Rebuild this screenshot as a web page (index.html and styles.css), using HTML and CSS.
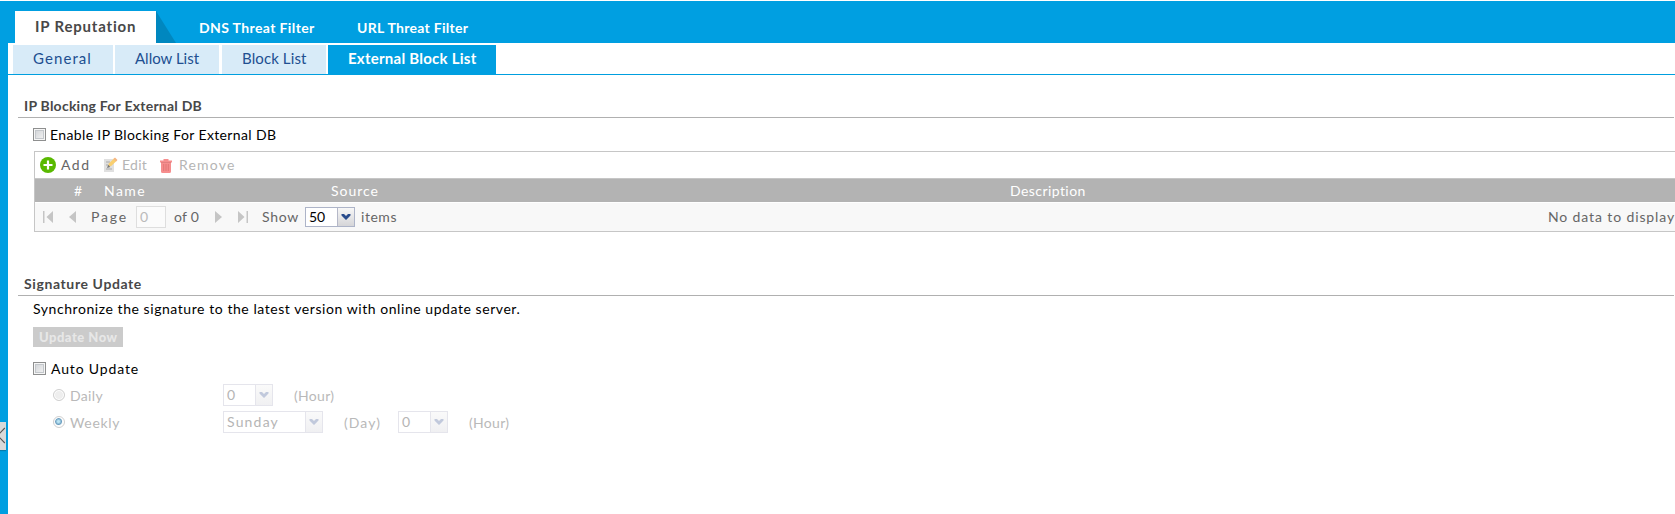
FILE: index.html
```html
<!DOCTYPE html>
<html lang="en">
<head>
<meta charset="utf-8">
<title>IP Reputation</title>
<link rel="stylesheet" href="styles.css">
</head>
<body>
<svg width="0" height="0" class="defs"><symbol id="chev" viewBox="0 0 10 7"><path d="M0.500 0h2.500L5 2 7 0h2.500v1.500L5 6 .5 1.500z"/></symbol></svg>
<div class="app">
  <header class="tabs">
    <div class="tab active">IP Reputation</div><i class="fold"></i>
    <div class="tab dns">DNS Threat Filter</div>
    <div class="tab url">URL Threat Filter</div>
  </header>
  <aside class="rail">
    <div class="handle"><svg width="6" height="28" viewBox="0 0 6 28"><path d="M4.800 6L-2.500 13.500 4.800 21" fill="none" stroke="#555" stroke-width="1.100"/></svg></div>
  </aside>
  <main>
    <nav class="subtabs">
      <div class="sub general">General</div>
      <div class="sub allow">Allow List</div>
      <div class="sub block">Block List</div>
      <div class="sub external">External Block List</div>
    </nav>
    <h2 class="title ip-title"><span>IP Blocking For External DB</span></h2>
    <label class="enable"><i class="check"></i><span>Enable IP Blocking For External DB</span></label>
    <section class="grid">
      <div class="toolbar">
        <svg width="16" height="16" viewBox="0 0 16 16"><circle cx="8" cy="8" r="8" fill="#59b900"/><path d="M8 3.500v9M3.500 8h9" stroke="#fff" stroke-width="2.200"/></svg>
        <span class="add">Add</span>
        <svg class="edit-icon" width="14" height="16" viewBox="0 0 14 16"><path d="M0 2h10v13H0z" fill="#e0e0e0"/><path d="M2 5h4M2 8h2M2 12h6" stroke="#aaa" stroke-width="1.200"/><path d="M4 9.500L4.800 6.500 10.500 1 13 3.500 7.200 9z" fill="#f9cf70"/><path d="M9.500 2L11 .5 13.500 3 12 4.500z" fill="#f5b583"/><path d="M3 11L4.200 7.800 6.300 9.900z" fill="#777"/></svg>
        <span class="edit">Edit</span>
        <svg class="bin-icon" width="12" height="14" viewBox="0 0 12 14"><path d="M0 1.500h3.500V0h5v1.500H12V3.500H0zM1 4h10v8.500Q11 14 9.500 14h-7Q1 14 1 12.500z" fill="#f68e8e"/><path d="M1 3.500h10M3.700 5v7M6 5v7M8.300 5v7" stroke="#dc6f6f" stroke-width=".8"/></svg>
        <span class="remove">Remove</span>
      </div>
      <div class="thead"><span>#</span><span class="name">Name</span><span class="source">Source</span><span class="desc">Description</span></div>
      <div class="pager">
        <svg class="first" width="10" height="12" viewBox="0 0 10 12"><path d="M0 0h1.500v12H0zM10 0v12L3.500 6z"/></svg>
        <svg class="prev" width="7" height="12" viewBox="0 0 7 12"><path d="M7 0v12L0 6z"/></svg>
        <span class="page">Page</span><span class="pageno">0</span><span class="of">of 0</span>
        <svg class="next" width="7" height="12" viewBox="0 0 7 12"><path d="M0 0v12L7 6z"/></svg>
        <svg class="last" width="10" height="12" viewBox="0 0 10 12"><path d="M0 0v12L6.500 6zM8.500 0H10v12H8.500z"/></svg>
        <span class="show">Show</span>
        <div class="select size"><span>50</span><b><svg width="10" height="7"><use href="#chev"/></svg></b></div>
        <span class="items">items</span>
        <span class="nodata">No data to display</span>
      </div>
    </section>
    <h2 class="title sig-title"><span>Signature Update</span></h2>
    <p class="sync">Synchronize the signature to the latest version with online update server.</p>
    <div class="button">Update Now</div>
    <label class="auto"><i class="check"></i><span>Auto Update</span></label>
    <div class="schedule">
      <i class="radio"></i><span class="when daily">Daily</span>
      <div class="select"><span>0</span><b><svg width="10" height="7"><use href="#chev"/></svg></b></div>
      <span class="unit hour">(Hour)</span>
    </div>
    <div class="schedule weekly-row">
      <i class="radio on"></i><span class="when weekly">Weekly</span>
      <div class="select wide"><span class="sunday">Sunday</span><b><svg width="10" height="7"><use href="#chev"/></svg></b></div>
      <span class="unit day">(Day)</span>
      <div class="select"><span>0</span><b><svg width="10" height="7"><use href="#chev"/></svg></b></div>
      <span class="unit hour">(Hour)</span>
    </div>
  </main>
</div>
</body>
</html>
```

FILE: styles.css
```css
* { box-sizing: border-box; }
body { margin: 0; background: #fff; color: #000; font: 14px/22px Lato, "Open Sans", sans-serif; overflow: hidden; }
svg { display: block; flex: none; }
span { white-space: nowrap; }
.defs { position: absolute; }
.app { display: grid; grid-template: 42px 471px / 8px 1667px; padding-top: 1px; }

.tabs { grid-column: 1 / 3; display: flex; background: #009fe1; padding: 10px 0 0 15px; }
.tab { font-weight: 700; color: #fff; line-height: 33px; white-space: nowrap; letter-spacing: .38px; }
.tab.active { width: 141px; padding-left: 20px; background: #fff; color: #484848; font-size: 15px; line-height: 31px; letter-spacing: .82px; }
.fold { width: 20px; height: 32px; background: #0087bf; clip-path: polygon(0 0, 100% 100%, 0 100%); }
.dns { margin-left: 23px; width: 158px; }
.url { letter-spacing: .29px; }

.rail { background: #009fe1; padding-top: 379px; }
.handle { width: 6px; height: 28px; background: #d9d9d9; box-shadow: 0 1px 1px #087bab; overflow: hidden; }

.subtabs { display: flex; height: 32px; padding: 2px 0 0 5px; border-bottom: 1px solid #009fdf; }
.sub { height: 29px; margin-right: 2px; background: #d8ebf8; color: #214f91; font-size: 15px; line-height: 27px; white-space: nowrap; }
.general { width: 100px; padding-left: 20px; letter-spacing: 1.08px; }
.allow { width: 104px; padding-left: 20px; letter-spacing: 0; margin-right: 3px; }
.block { width: 104px; padding-left: 20px; letter-spacing: .11px; }
.external { width: 168px; padding-left: 20px; background: #009fe1; color: #fff; font-weight: 700; letter-spacing: .25px; }

.title { display: flex; align-items: flex-end; margin: 0 1px 0 10px; padding-left: 6px; border-bottom: 1px solid #b0b0b0; color: #484848; font-size: 14px; line-height: 23px; }
.ip-title { height: 43px; letter-spacing: .24px; }
.sig-title { height: 64px; letter-spacing: .61px; }
.enable, .auto { display: flex; align-items: center; gap: 4px; padding-left: 25px; }
.enable { height: 33px; letter-spacing: .37px; }
.check { width: 13px; height: 13px; border: 1px solid #8e8f8f; background: linear-gradient(135deg, #cdd0d4, #f6f6f6); box-shadow: inset 0 0 0 1px #f6f6f6, inset 0 0 0 2px #c3c7cb; }

.grid { margin-left: 26px; height: 81px; border: 1px solid #c6c6c6; border-right: 0; }
.toolbar { display: flex; align-items: center; height: 26px; padding-left: 5px; color: #b5b5b5; }
.add { width: 42px; margin-left: 5px; color: #666; letter-spacing: 1.5px; }
.edit-icon { margin-left: 1px; }
.edit { width: 38px; margin-left: 4px; letter-spacing: .25px; }
.bin-icon { margin-top: 1px; }
.remove { margin-left: 7px; letter-spacing: 1.19px; }
.thead { display: flex; height: 24px; padding-left: 39px; border-top: 1px solid #c6c6c6; background: #b3b3b3; color: #fff; line-height: 23px; }
.thead span:first-child { width: 30px; }
.name { width: 227px; letter-spacing: 1.41px; }
.source { width: 679px; letter-spacing: .99px; }
.desc { letter-spacing: .43px; }
.pager { display: flex; align-items: center; height: 29px; border-top: 1px solid #fff; background: #f8f8f8; color: #666; fill: #c5c5c5; }
.first { margin-left: 8px; }
.prev { margin-left: 16px; }
.page { margin-left: 15px; width: 45px; letter-spacing: 1.82px; }
.pageno { width: 30px; height: 22px; padding-left: 3px; border: 1px solid #dedede; background: #fbfbfb; color: #bababa; line-height: 20px; }
.of { width: 41px; margin-left: 8px; letter-spacing: .25px; }
.last { margin-left: 16px; }
.show { width: 43px; margin-left: 14px; letter-spacing: .72px; }
.items { margin-left: 6px; letter-spacing: .54px; }
.nodata { margin: 0 0 0 auto; letter-spacing: .88px; }

.select { display: flex; justify-content: space-between; width: 50px; height: 22px; border: 1px solid #e5e5ec; background: #fff; color: #b5b5b5; fill: #c1c9dc; line-height: 20px; }
.select span { padding-left: 3px; }
.select b { display: flex; align-items: center; justify-content: center; width: 17px; border-left: 1px solid #e5e5ec; background: linear-gradient(#fafafa, #f0f0f2); }
.select.wide { width: 100px; }
.size { height: 20px; border-color: #adb4c8; color: #000; fill: #284b8c; line-height: 18px; }
.size b { border-color: #b5b8c8; background: linear-gradient(#f7f7f7, #d5d5d8); }

.sync { margin: 0; padding-left: 25px; line-height: 25px; letter-spacing: .56px; }
.button { width: 90px; height: 20px; margin: 6px 0 0 25px; padding-left: 6px; background: #cbcbcb; color: #e7e7e7; font-weight: 900; font-size: 13px; line-height: 20px; letter-spacing: .5px; white-space: nowrap; }
.auto { height: 25px; margin-top: 9px; gap: 5px; letter-spacing: .85px; }
.schedule { display: flex; height: 22px; margin-top: 3px; padding-left: 45px; color: #b9b9b9; }
.weekly-row { margin-top: 5px; }
.radio { width: 12px; height: 12px; margin-top: 5px; border: 1px solid #d0d0d0; border-radius: 50%; background: #eee; box-shadow: inset 0 0 0 1px #fff; }
.radio.on { background: radial-gradient(circle at 45% 45%, #b9e3f3 0 1px, #6d9fc0 3px, #fafafa 4px); }
.when { width: 153px; margin-left: 5px; padding-top: 1px; }
.daily { letter-spacing: .34px; }
.weekly { letter-spacing: .65px; }
.sunday { letter-spacing: 1.18px; }
.unit { margin-left: 21px; padding-top: 1px; }
.hour { letter-spacing: .3px; }
.day { width: 54px; letter-spacing: 1.07px; }
```
